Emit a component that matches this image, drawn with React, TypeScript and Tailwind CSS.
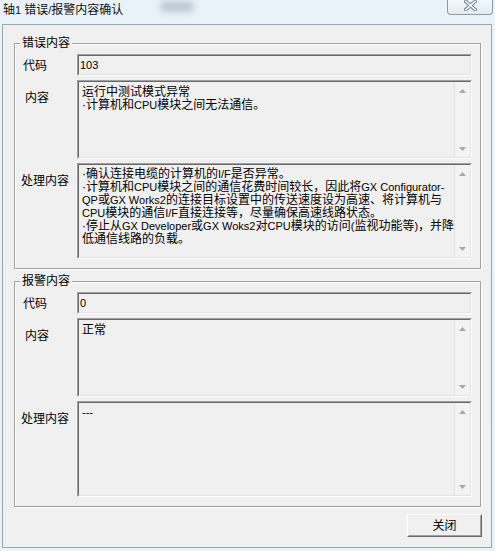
import React from "react";

const LATIN = /^[A-Za-z0-9\/\-\(\) ]+$/;

function Mixed({ text }: { text: string }) {
  const parts = text.split(/([A-Za-z0-9\/\-\(\) ]+)/).filter((p) => p.length > 0);
  return (
    <>
      {parts.map((p, i) =>
        LATIN.test(p) ? (
          <span key={i} className="text-[11px]">
            {p}
          </span>
        ) : (
          <span key={i}>{p}</span>
        )
      )}
    </>
  );
}

function Arrow({ up }: { up: boolean }) {
  return (
    <svg width="7" height="4" viewBox="0 0 7 4">
      {up ? (
        <path d="M0 4 L3.5 0 L7 4 Z" fill="#a8a8a8" />
      ) : (
        <path d="M0 0 L7 0 L3.5 4 Z" fill="#a8a8a8" />
      )}
    </svg>
  );
}

function Scrollbar() {
  return (
    <div className="flex w-[16px] shrink-0 flex-col justify-between border-l border-[#e4e4e4] bg-[#f3f3f3]">
      <div className="flex h-[17px] items-center justify-center">
        <Arrow up />
      </div>
      <div className="flex h-[17px] items-center justify-center">
        <Arrow up={false} />
      </div>
    </div>
  );
}

function Sunken({
  heightClass,
  scroll,
  children,
}: {
  heightClass: string;
  scroll?: boolean;
  children: React.ReactNode;
}) {
  return (
    <div
      className={
        "border border-t-[#a0a0a0] border-l-[#a0a0a0] border-b-white border-r-white " + heightClass
      }
    >
      <div className="flex h-full border border-t-[#696969] border-l-[#696969] border-b-[#e3e3e3] border-r-[#e3e3e3] bg-[#f0f0f0]">
        <div className="min-w-0 flex-1 overflow-hidden">{children}</div>
        {scroll ? <Scrollbar /> : null}
      </div>
    </div>
  );
}

function Group({
  title,
  code,
  content,
  process,
}: {
  title: string;
  code: string;
  content: string[];
  process: string[];
}) {
  return (
    <fieldset className="border border-[#a0a0a0] pb-[9px] shadow-[inset_1px_1px_0_#ffffff,1px_1px_0_#ffffff]">
      <legend className="ml-[5px] bg-[#f0f0f0] px-[2px] leading-[16px]">{title}</legend>
      <div className="grid grid-cols-[62px_1fr] gap-y-[4px] pr-[8px] pt-[3px]">
        <div className="pl-[8px] pt-[4px] leading-[16px]">代码</div>
        <Sunken heightClass="h-[22px]">
          <div className="pl-[1px] pt-[2px] leading-[14px]">
            <Mixed text={code} />
          </div>
        </Sunken>

        <div className="pl-[10px] pt-[10px] leading-[16px]">内容</div>
        <Sunken heightClass="h-[79px]" scroll>
          <div className="pl-[3px] pt-[4px] leading-[13px]">
            {content.map((l, i) => (
              <div key={i} className="whitespace-nowrap">
                <Mixed text={l} />
              </div>
            ))}
          </div>
        </Sunken>

        <div className="pl-[6px] pt-[10px] leading-[16px]">处理内容</div>
        <Sunken heightClass="h-[96px]" scroll>
          <div className="pl-[3px] pt-[3px] leading-[13px]">
            {process.map((l, i) => (
              <div key={i} className="whitespace-nowrap">
                <Mixed text={l} />
              </div>
            ))}
          </div>
        </Sunken>
      </div>
    </fieldset>
  );
}

export default function App() {
  return (
    <div className="flex h-[551px] w-[495px] flex-col overflow-hidden bg-gradient-to-b from-[#e8f2f8] to-[#eaf3f8] font-['Liberation_Sans','Noto_Sans_CJK_SC',sans-serif] text-[12px] text-black">
      {/* title bar */}
      <div className="relative flex h-[24px] shrink-0 items-start justify-between">
        <div className="absolute left-[160px] top-[1px] h-[11px] w-[34px] rounded-full bg-[#a9b8c6] opacity-70 blur-[3px]" />
        <div className="relative pl-[3px] leading-[20px] text-[#111]">
          <Mixed text="轴1 错误/报警内容确认" />
        </div>
        <div className="relative mr-[2px] flex h-[15px] w-[46px] items-start justify-center rounded-b-[4px] border border-t-0 border-[#8e9aa6] bg-gradient-to-b from-[#f5f9fc] to-[#e2eaf0]">
          <svg width="13" height="11" viewBox="0 0 13 11">
            <path d="M2 1.5 L11 9.5 M11 1.5 L2 9.5" stroke="#6f7f8e" strokeWidth="3.6" strokeLinecap="square" />
            <path d="M2 1.5 L11 9.5 M11 1.5 L2 9.5" stroke="#ffffff" strokeWidth="1.6" strokeLinecap="square" />
          </svg>
        </div>
      </div>

      {/* client area */}
      <div className="mb-[3px] ml-[2px] mr-[3px] flex flex-1 flex-col border border-[#9aa6b0] bg-[#f0f0f0] pl-[11px] pr-[10px] pt-[10px]">
        <Group
          title="错误内容"
          code="103"
          content={["运行中测试模式异常", "·计算机和CPU模块之间无法通信。"]}
          process={[
            "·确认连接电缆的计算机的I/F是否异常。",
            "·计算机和CPU模块之间的通信花费时间较长，因此将GX Configurator-",
            "QP或GX Works2的连接目标设置中的传送速度设为高速、将计算机与",
            "CPU模块的通信I/F直接连接等，尽量确保高速线路状态。",
            "·停止从GX Developer或GX Woks2对CPU模块的访问(监视功能等)，并降",
            "低通信线路的负载。",
          ]}
        />
        <div className="mt-[4px]">
          <Group title="报警内容" code="0" content={["正常"]} process={["---"]} />
        </div>
        <div className="mr-[-1px] mt-[7px] flex justify-end">
          <button className="h-[23px] w-[75px] border border-t-white border-l-white border-b-[#696969] border-r-[#696969] bg-[#f0f0f0] p-0">
            <div className="flex h-full w-full items-center justify-center border border-t-[#f0f0f0] border-l-[#f0f0f0] border-b-[#a0a0a0] border-r-[#a0a0a0] leading-[16px]">
              关闭
            </div>
          </button>
        </div>
      </div>
    </div>
  );
}
